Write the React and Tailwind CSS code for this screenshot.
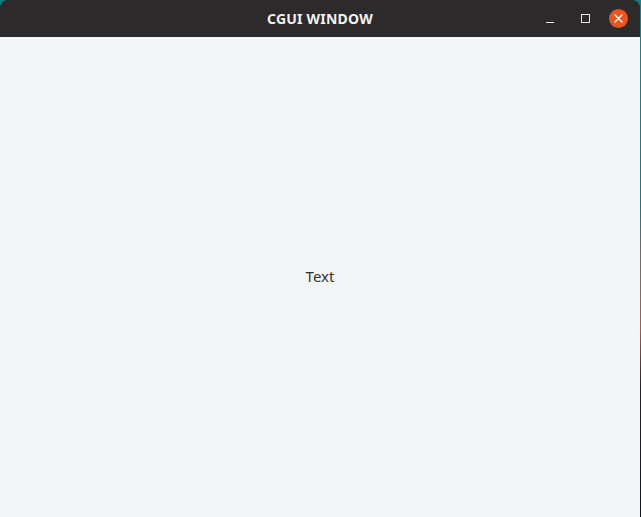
export default function App() {
  return (
    <div className="flex h-[517px] w-[641px] bg-[#0b7f86] font-['Noto_Sans',sans-serif]">
      <div className="flex w-[640px] flex-col">
        <div className="relative flex h-[37px] shrink-0 items-center justify-center rounded-t-[8px] bg-[#2c2a2a]">
          <span className="text-[14px] font-bold tracking-[0.2px] text-[#f2f2f2]">CGUI WINDOW</span>
          <div className="absolute right-[12px] top-0 flex h-[37px] items-center">
            <div className="flex h-[20px] w-[30px] items-center justify-center">
              <div className="mt-[8px] h-[1px] w-[8px] bg-[#e6e6e6]" />
            </div>
            <div className="ml-[5px] flex h-[20px] w-[30px] items-center justify-center">
              <div className="h-[9px] w-[9px] border border-[#e6e6e6]" />
            </div>
            <div className="ml-[9px] flex h-[19px] w-[19px] items-center justify-center rounded-full bg-[#e95420]">
              <svg width="9" height="9" viewBox="0 0 9 9">
                <path d="M1 1L8 8M8 1L1 8" stroke="#ffffff" strokeWidth="1.4" strokeLinecap="round" />
              </svg>
            </div>
          </div>
        </div>
        <div className="flex flex-1 items-center justify-center bg-[#f4f5f7]">
          <span className="-mt-[1px] text-[15px] text-[#333333]">Text</span>
        </div>
      </div>
      <div className="w-[1px] bg-[linear-gradient(to_bottom,#0a8a90_0%,#0a7f86_40%,#6f6a66_48%,#8a6a5a_55%,#c0503a_64%,#2a1e24_75%,#10161e_100%)]" />
    </div>
  );
}
